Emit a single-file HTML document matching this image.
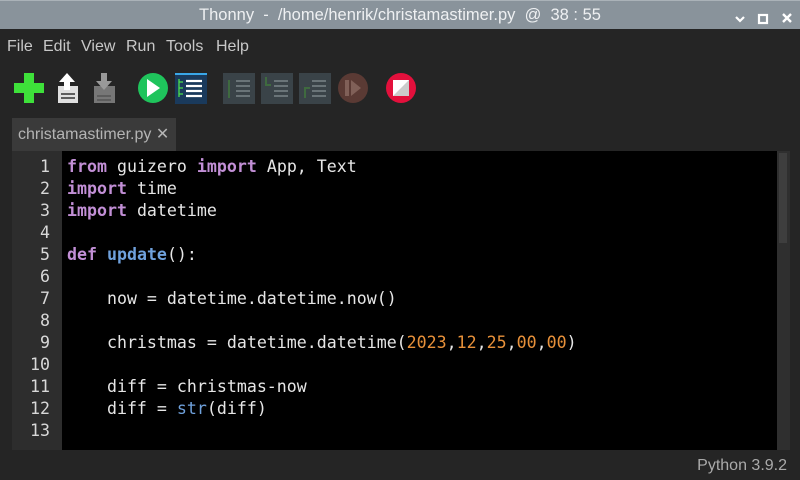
<!DOCTYPE html>
<html><head><meta charset="utf-8"><style>
*{margin:0;padding:0;box-sizing:border-box}
body{width:800px;height:480px;background:#252525;position:relative;overflow:hidden;font-family:"Liberation Sans",sans-serif}
#title{position:absolute;left:0;top:0;width:800px;height:29px;background:#89939b;color:#eef0f2;font-size:16.5px;line-height:29px;text-align:center;border-top:1px solid #aab2b8}
.m{position:absolute;top:38px;color:#c8c8c8;font-size:16px}
.ic{position:absolute;top:72px}
#tab{position:absolute;left:12px;top:118px;width:164px;height:33px;background:#3a3a3a;color:#b4b4b4;font-size:16px;line-height:33px;padding-left:6px}
#gut{position:absolute;left:12px;top:151px;width:50px;height:299px;background:#2d2d2d}
#code{position:absolute;left:62px;top:151px;width:715px;height:299px;background:#000}
#sb{position:absolute;left:777px;top:151px;width:13px;height:299px;background:#2f2f2f}
#sbt{position:absolute;left:779px;top:153px;width:8px;height:90px;background:#3e3e3e}
.ln{position:absolute;left:12px;width:38px;text-align:right;color:#d8d8d8}
.ln,.cl{font-family:"DejaVu Sans Mono",monospace;font-size:16.6px;line-height:22px;height:22px}
.cl{position:absolute;left:67px;color:#e6e6e6;white-space:pre}
.k{color:#c28fd6;font-weight:bold}.f{color:#6fa1dc;font-weight:bold}.n{color:#e8913a}.b{color:#6fa1dc}
#st{position:absolute;right:13px;top:457px;color:#aaa;font-size:16px}
</style></head><body>
<div id="title">Thonny &nbsp;-&nbsp; /home/henrik/christamastimer.py &nbsp;@&nbsp; 38 : 55</div>
<svg style="position:absolute;left:730px;top:5px" width="70" height="20"><path d="M6 12l4 4 4-4" stroke="#fff" stroke-width="2.2" fill="none"/><rect x="29" y="10" width="8" height="8" stroke="#fff" stroke-width="2.2" fill="none"/><path d="M53 9l8 8M61 9l-8 8" stroke="#fff" stroke-width="2.4"/></svg>
<div class="m" style="left:7px">File</div><div class="m" style="left:43px">Edit</div><div class="m" style="left:81px">View</div><div class="m" style="left:126px">Run</div><div class="m" style="left:166px">Tools</div><div class="m" style="left:216px">Help</div>
<svg class="ic" style="left:0" width="430" height="34">
<path d="M24 1h10v10h10v10h-10v10h-10v-10h-10v-10h10z" fill="#3ee13a"/>
<path d="M58 14h20v17h-20z" fill="#e0e0e0"/><path d="M67 1l-8 9h5v8h6v-8h5z" fill="#fff"/><path d="M61 22h14M61 26h14" stroke="#333" stroke-width="1.5"/>
<path d="M94 14h21v17h-21z" fill="#777"/><path d="M101 1h6v8h5l-8 9-8-9h5z" fill="#999"/><path d="M97 24h14M97 28h14" stroke="#555" stroke-width="1.5"/>
<circle cx="153" cy="16" r="15" fill="#1fc45c"/><path d="M147 7l13 9-13 9z" fill="#fff"/>
<rect x="175" y="1" width="32" height="31" fill="#1a3a5c"/><rect x="175" y="1" width="32" height="2" fill="#3aa7e8"/><path d="M186 9h16M186 14h16M186 19h16M186 24h16" stroke="#fff" stroke-width="2.2"/><path d="M179 7v18M179 10h4M179 16h4M179 22h4" stroke="#4ce04c" stroke-width="1.3"/>
<rect x="223" y="1" width="32" height="31" fill="#3a4348"/><path d="M236 9h14M236 14h14M236 19h14M236 24h14" stroke="#6a7478" stroke-width="2"/><path d="M229 8v18" stroke="#3f6a3f" stroke-width="2"/>
<rect x="261" y="1" width="32" height="31" fill="#3a4348"/><path d="M274 9h14M274 14h14M274 19h14M274 24h14" stroke="#6a7478" stroke-width="2"/><path d="M266 5v8h5" stroke="#3f6a3f" stroke-width="2" fill="none"/>
<rect x="299" y="1" width="32" height="31" fill="#3a4348"/><path d="M312 9h14M312 14h14M312 19h14M312 24h14" stroke="#6a7478" stroke-width="2"/><path d="M310 16h-5v10" stroke="#3f6a3f" stroke-width="2" fill="none"/>
<circle cx="353" cy="16" r="15" fill="#5a3a34"/><rect x="345" y="8" width="4" height="16" fill="#806058"/><path d="M351 8l10 8-10 8z" fill="#806058"/>
<circle cx="401" cy="16" r="15" fill="#e3103c"/><rect x="393" y="8" width="16" height="16" fill="#fff"/><path d="M409 8v16h-16z" fill="#ccc"/>
</svg>
<div id="tab">christamastimer.py ✕</div>
<div id="gut"></div><div id="code"></div><div id="sb"></div><div id="sbt"></div>
<div class="ln" style="top:156px">1</div><div class="ln" style="top:178px">2</div><div class="ln" style="top:200px">3</div><div class="ln" style="top:222px">4</div><div class="ln" style="top:244px">5</div><div class="ln" style="top:266px">6</div><div class="ln" style="top:288px">7</div><div class="ln" style="top:310px">8</div><div class="ln" style="top:332px">9</div><div class="ln" style="top:354px">10</div><div class="ln" style="top:376px">11</div><div class="ln" style="top:398px">12</div><div class="ln" style="top:420px">13</div>
<div class="cl" style="top:156px"><span class="k">from</span> guizero <span class="k">import</span> App, Text</div>
<div class="cl" style="top:178px"><span class="k">import</span> time</div>
<div class="cl" style="top:200px"><span class="k">import</span> datetime</div>
<div class="cl" style="top:244px"><span class="k">def</span> <span class="f">update</span>():</div>
<div class="cl" style="top:288px">    now = datetime.datetime.now()</div>
<div class="cl" style="top:332px">    christmas = datetime.datetime(<span class="n">2023</span>,<span class="n">12</span>,<span class="n">25</span>,<span class="n">00</span>,<span class="n">00</span>)</div>
<div class="cl" style="top:376px">    diff = christmas-now</div>
<div class="cl" style="top:398px">    diff = <span class="b">str</span>(diff)</div>
<div id="st">Python 3.9.2</div>
</body></html>
